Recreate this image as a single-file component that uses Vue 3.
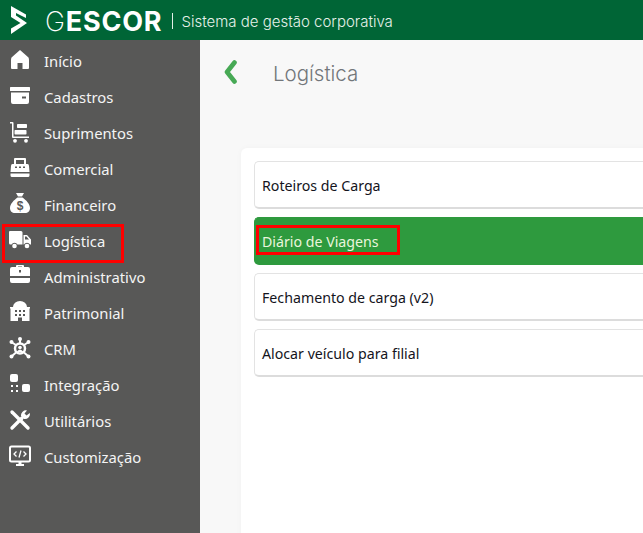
<script setup>
const menu = [
  { label: 'Início', icon: 'home' },
  { label: 'Cadastros', icon: 'archive' },
  { label: 'Suprimentos', icon: 'cart' },
  { label: 'Comercial', icon: 'register' },
  { label: 'Financeiro', icon: 'money' },
  { label: 'Logística', icon: 'truck', marked: true },
  { label: 'Administrativo', icon: 'case' },
  { label: 'Patrimonial', icon: 'building' },
  { label: 'CRM', icon: 'crm' },
  { label: 'Integração', icon: 'integ' },
  { label: 'Utilitários', icon: 'tools' },
  { label: 'Customização', icon: 'code' },
]
const entries = [
  { label: 'Roteiros de Carga' },
  { label: 'Diário de Viagens', active: true },
  { label: 'Fechamento de carga (v2)' },
  { label: 'Alocar veículo para filial' },
]
</script>

<template>
  <div class="page">
    <header class="topbar">
      <svg class="logo" viewBox="0 0 18 28" width="18" height="28">
        <path fill="#fff" fill-rule="evenodd" d="M1 0 L16 8.500 V12 L6 7 V9.500 L17 17 L1 28 V22.500 L10.500 17 L1 11 Z" />
      </svg>
      <span class="brand"><span class="brand-g">G</span><b>ESCOR</b></span>
      <span class="sep"></span>
      <span class="tagline">Sistema de gestão corporativa</span>
    </header>
    <div class="body">
      <nav class="side">
        <div v-for="m in menu" :key="m.label" class="nav-item" :class="{ marked: m.marked }">
          <svg class="ico" viewBox="0 0 22 22" width="22" height="22" fill="#fff">
            <path v-if="m.icon === 'home'" d="M11 1 L19.500 8.500 Q20 9.500 20 11 V19 Q20 20 19 20 H13.500 V14 H8.500 V20 H3 Q2 20 2 19 V11 Q2 9.500 2.500 8.500 Z" />
            <template v-else-if="m.icon === 'archive'">
              <rect x="1" y="2" width="20" height="4" rx=".5" />
              <path fill-rule="evenodd" d="M2 7.500 H20 V17 Q20 19 18 19 H4 Q2 19 2 17 Z M13 11.500 V13.500 H17 V11.500 Z" />
            </template>
            <template v-else-if="m.icon === 'cart'">
              <path d="M1 1 H3.500 Q4.500 1 4.500 2 V15.500 H20 V17 H4 Q3 17 3 16 V2.500 H1 Z" />
              <rect x="8" y="3" width="10" height="4" rx=".7" />
              <rect x="5.500" y="9" width="12" height="4.500" rx=".7" />
              <circle cx="6" cy="19.800" r="1.900" />
              <circle cx="17" cy="19.800" r="1.900" />
            </template>
            <path v-else-if="m.icon === 'register'" fill-rule="evenodd" d="M6 1 H16 Q17 1 17 2 V7 H18.500 Q20 7 20 9 L20.500 15 H1.500 L2 9 Q2 7 3.500 7 H5 V2 Q5 1 6 1 Z M7 3 V7 H15 V3 Z M6 9.500 V11 H8 V9.500 Z M10 9.500 V11 H12 V9.500 Z M14 9.500 V11 H16 V9.500 Z M1.500 16.500 H20.500 V18.500 Q20.500 20 19 20 H3 Q1.500 20 1.500 18.500 Z" />
            <g v-else-if="m.icon === 'money'">
              <path fill-rule="evenodd" d="M7 0 H15 L13 3.500 H9 Z M8.500 4.500 H13.500 C17 7 21 11 21 15 C21 18 19 20 16 20 H6 C3 20 1 18 1 15 C1 11 5 7 8.500 4.500 Z" />
              <text x="11" y="17" text-anchor="middle" class="dollar">$</text>
            </g>
            <template v-else-if="m.icon === 'truck'">
              <path d="M1 2 H12 Q13.500 2 13.500 3.500 V15.500 H8.500 A3.500 3.500 0 0 0 2.500 15.500 H1.500 Q0 15.500 0 14 V3 Q0 2 1 2 Z" />
              <path fill-rule="evenodd" d="M14.500 6 H18 L22 10.500 V15.500 H21 A3.500 3.500 0 0 0 15 15.500 H14.500 Z M16 7.500 V10.500 H20 L17.500 7.500 Z" />
              <circle cx="5.500" cy="17" r="2.300" />
              <circle cx="18" cy="17" r="2.300" />
            </template>
            <path v-else-if="m.icon === 'case'" fill-rule="evenodd" d="M7 2 V1 Q7 0 8 0 H14 Q15 0 15 1 V2 H19 Q21 2 21 4 V11 H1 V4 Q1 2 3 2 Z M9 1.500 V2 H13 V1.500 Z M10 5 V7.500 H12 V5 Z M1 13 H21 V16 Q21 18 19 18 H3 Q1 18 1 16 Z" />
            <path v-else-if="m.icon === 'building'" fill-rule="evenodd" d="M4 6 A7 6 0 0 1 18 6 H21 V7.500 H20.500 V20 H13 V16.500 H9 V20 H1.500 V7.500 H1 V6 Z M6 9 V11 H8 V9 Z M10 9 V11 H12 V9 Z M14 9 V11 H16 V9 Z M6 13 V15 H8 V13 Z M10 13 V15 H12 V13 Z M14 13 V15 H16 V13 Z" />
            <g v-else-if="m.icon === 'crm'">
              <g stroke="#fff" stroke-width="2" fill="none">
                <path d="M11 2 V6 M3 5.500 L7 8 M19 5.500 L15 8 M3 19 L7 15.500 M19 19 L15 15.500" />
                <circle cx="11" cy="11.500" r="5" stroke-width="2.500" />
              </g>
              <circle cx="11" cy="2" r="2" /><circle cx="2.500" cy="5" r="2" /><circle cx="19.500" cy="5" r="2" />
              <circle cx="2.500" cy="19.500" r="2" /><circle cx="19.500" cy="19.500" r="2" />
              <circle cx="11" cy="10.500" r="1.800" /><path d="M7.500 15 Q11 10 14.500 15 Z" />
            </g>
            <template v-else-if="m.icon === 'integ'">
              <rect x="1" y="1" width="8" height="8" rx="2" />
              <rect x="13" y="11" width="8" height="8" rx="2" />
              <rect x="2" y="12" width="2" height="2" /><rect x="7" y="12" width="2" height="2" />
              <rect x="2" y="17" width="2" height="2" /><rect x="7" y="17" width="2" height="2" />
            </template>
            <g v-else-if="m.icon === 'tools'">
              <path d="M3 3 L19 19" stroke="#fff" stroke-width="3.400" stroke-linecap="round" />
              <path d="M3 19 L13 9" stroke="#fff" stroke-width="3.400" stroke-linecap="round" />
              <path d="M12 7 A5 5 0 0 1 18 1.500 L15.500 4.500 L17.500 6.500 L20.800 4 A5 5 0 0 1 15 10 Z" />
            </g>
            <g v-else-if="m.icon === 'code'">
              <rect x="1" y="1.500" width="20" height="15" rx="1.500" fill="none" stroke="#fff" stroke-width="2" />
              <path d="M7 19 H15 V21 H7 Z M9.500 16 H12.500 V19 H9.500 Z" />
              <path d="M7.500 6.500 L5 9 L7.500 11.500 M14.500 6.500 L17 9 L14.500 11.500 M12 5.500 L10 12.500" fill="none" stroke="#fff" stroke-width="1.300" />
            </g>
          </svg>
          <span class="nav-label">{{ m.label }}</span>
        </div>
      </nav>
      <main class="main">
        <div class="title-row">
          <svg class="back" viewBox="0 0 13 24" width="13" height="24">
            <path d="M10.500 2.500 L3 12 L10.500 21.500" fill="none" stroke="#47a955" stroke-width="4.600" stroke-linecap="round" stroke-linejoin="round" />
          </svg>
          <h1 class="title">Logística</h1>
        </div>
        <section class="card">
          <div v-for="e in entries" :key="e.label" class="entry" :class="{ active: e.active }">
            <span class="entry-label">{{ e.label }}</span>
          </div>
        </section>
      </main>
    </div>
  </div>
</template>

<style scoped>
.page {
  width: 643px;
  height: 533px;
  display: flex;
  flex-direction: column;
  overflow: hidden;
  font-family: "Noto Sans", "Open Sans", sans-serif;
}
.topbar {
  height: 40px;
  flex: none;
  background: #006536;
  display: flex;
  align-items: center;
  color: #fff;
  padding-left: 10px;
}
.logo { flex: none; margin-top: -1px; }
.brand {
  margin-left: 17px;
  font-family: Inter, sans-serif;
  font-size: 27px;
  line-height: 1;
  letter-spacing: .8px;
  margin-top: 2px;
}
.brand-g { font-weight: 200; }
.brand b { font-weight: 700; }
.sep {
  width: 1px;
  height: 16px;
  background: #e3efe8;
  margin: 1px 8px 0 10px;
}
.tagline {
  font-family: Inter, sans-serif;
  font-weight: 300;
  font-size: 15px;
  color: #e6f1ea;
  letter-spacing: 0;
  margin-top: 2px;
}
.body { flex: 1; display: flex; min-height: 0; }
.side {
  width: 200px;
  flex: none;
  background: #585857;
  padding-top: 3px;
}
.nav-item {
  height: 36px;
  display: flex;
  align-items: center;
  padding-left: 9px;
  position: relative;
  color: #f4f4f4;
  font-size: 14.800px;
}
.ico { flex: none; margin-top: -2px; }
.nav-label { margin-left: 13px; }
.nav-item.marked::after {
  content: "";
  position: absolute;
  left: 2px;
  top: 1px;
  width: 122px;
  height: 39px;
  border: 3px solid #f00;
  box-sizing: border-box;
}
.dollar {
  font-size: 12px;
  font-weight: 700;
  fill: #585857;
  font-family: "Liberation Sans", sans-serif;
}
.main {
  flex: 1;
  background: #f8f8f8;
  min-width: 0;
  padding-left: 41px;
}
.title-row {
  height: 64px;
  display: flex;
  align-items: center;
  margin-left: -17px;
}
.back { flex: none; }
.title {
  margin: 2px 0 0 36px;
  font-family: Inter, sans-serif;
  font-weight: 300;
  font-size: 20.500px;
  color: #72767a;
}
.card {
  margin-top: 44px;
  width: 440px;
  height: 400px;
  box-sizing: border-box;
  background: #fff;
  border-radius: 6px 0 0 6px;
  padding: 13px 0 0 13px;
  display: flex;
  flex-direction: column;
  gap: 8px;
  box-shadow: 0 0 6px rgba(0, 0, 0, .03);
}
.entry {
  height: 48px;
  box-sizing: border-box;
  border: 1px solid #e3e3e3;
  border-bottom: 2px solid #dcdcdc;
  border-right: 0;
  border-radius: 5px 0 0 5px;
  display: flex;
  align-items: center;
  padding: 1px 0 0 7px;
  color: #14141c;
  font-size: 14.200px;
  background: #fff;
}
.entry.active {
  background: #2e9a3e;
  border-color: #2e9a3e;
  color: #eaf5dc;
}
.entry-label { position: relative; }
.entry.active .entry-label::after {
  content: "";
  position: absolute;
  left: -6px;
  top: -7px;
  width: 144px;
  height: 30px;
  border: 3px solid #f00;
  box-sizing: border-box;
}
</style>

<style>
html, body { margin: 0; overflow: hidden; background: #f8f8f8; }
</style>
